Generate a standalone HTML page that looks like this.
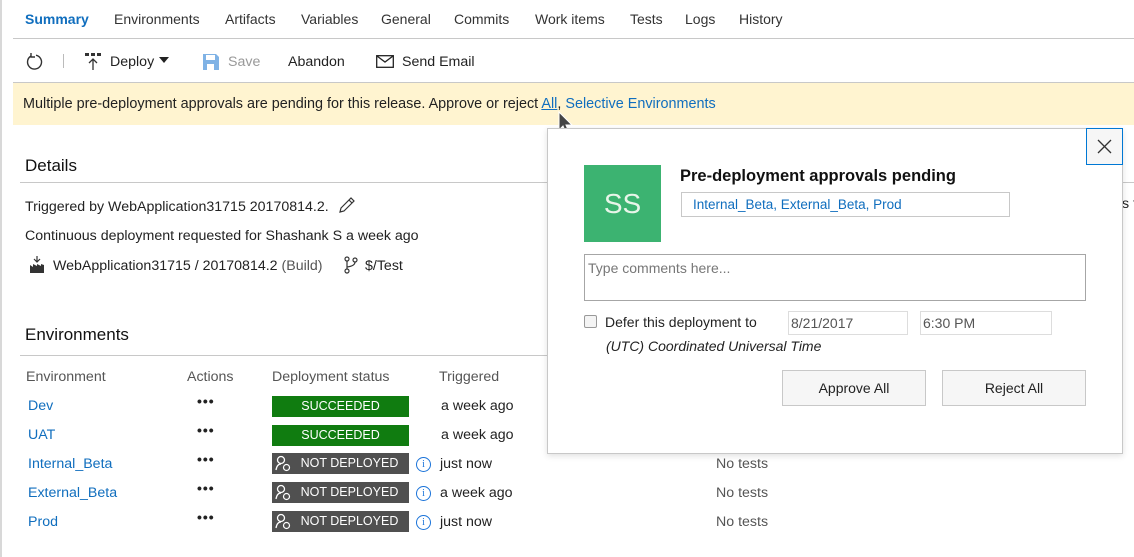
<!DOCTYPE html>
<html><head><meta charset="utf-8"><style>
*{margin:0;padding:0;box-sizing:border-box}
body{width:1134px;height:557px;background:#fff;font-family:"Liberation Sans",sans-serif;font-size:14.2px;color:#222;position:relative;overflow:hidden}
.a{position:absolute;white-space:nowrap}
.tab{color:#333;font-size:14px}
.lnk{color:#106ebe}
.badge{position:absolute;height:21px;color:#fff;font-size:12.5px;line-height:21px;text-align:center;width:137px;left:272px}
.g{background:#107c10}
.d{background:#505050;padding-left:18px}
.info{position:absolute;left:416px;width:15px;height:15px;border:1.3px solid #1a73d9;border-radius:50%;color:#1a73d9;font-size:10px;line-height:13px;text-align:center;font-family:"Liberation Serif",serif}
.dots{position:absolute;left:197px;font-weight:bold;font-size:14px;letter-spacing:1px;color:#222}
.t{font-size:14.2px}
</style></head><body>
<div class="a" style="left:0;top:0;width:2px;height:557px;background:#d8d8d8"></div>
<div class="a tab" style="left:25px;top:11px;color:#106ebe;font-weight:bold">Summary</div>
<div class="a tab" style="left:114px;top:11px">Environments</div>
<div class="a tab" style="left:225px;top:11px">Artifacts</div>
<div class="a tab" style="left:301px;top:11px">Variables</div>
<div class="a tab" style="left:381px;top:11px">General</div>
<div class="a tab" style="left:454px;top:11px">Commits</div>
<div class="a tab" style="left:535px;top:11px">Work items</div>
<div class="a tab" style="left:630px;top:11px">Tests</div>
<div class="a tab" style="left:685px;top:11px">Logs</div>
<div class="a tab" style="left:739px;top:11px">History</div>
<div class="a" style="left:13px;top:38px;width:1121px;height:1px;background:#c8c8c8"></div>
<svg class="a" style="left:25px;top:52px" width="20" height="20" viewBox="0 0 20 20"><path d="M6 4 A7 7 0 1 0 11 3.2" fill="none" stroke="#333" stroke-width="1.4"/><path d="M6 1 L6 5 L10 5" fill="none" stroke="#333" stroke-width="1.4"/></svg>
<div class="a" style="left:63px;top:54px;width:1px;height:14px;background:#bbb"></div>
<svg class="a" style="left:84px;top:52px" width="18" height="20" viewBox="0 0 18 20"><rect x="1" y="1" width="4" height="3" fill="#333"/><rect x="7" y="1" width="4" height="3" fill="#333"/><rect x="13" y="1" width="4" height="3" fill="#333"/><path d="M9 18 V7 M5 11 L9 7 L13 11" fill="none" stroke="#333" stroke-width="1.3"/></svg>
<div class="a t" style="left:110px;top:54px">Deploy</div>
<div class="a" style="left:159px;top:57px;width:0;height:0;border-left:5px solid transparent;border-right:5px solid transparent;border-top:6px solid #222"></div>
<svg class="a" style="left:202px;top:53px" width="18" height="18" viewBox="0 0 18 18"><path d="M1 1 H14 L17 4 V17 H1 Z" fill="#7fb2e5"/><rect x="4" y="2" width="9" height="5" fill="#fff"/><rect x="5" y="11" width="7" height="6" fill="#fff"/></svg>
<div class="a t" style="left:228px;top:54px;color:#999">Save</div>
<div class="a t" style="left:288px;top:54px">Abandon</div>
<svg class="a" style="left:376px;top:55px" width="18" height="13" viewBox="0 0 18 13"><rect x="0.7" y="0.7" width="16.6" height="11.6" fill="none" stroke="#222" stroke-width="1.3"/><path d="M1 1 L9 7 L17 1" fill="none" stroke="#222" stroke-width="1.3"/></svg>
<div class="a t" style="left:402px;top:54px">Send Email</div>
<div class="a" style="left:13px;top:82px;width:1121px;height:1px;background:#c8c8c8"></div>
<div class="a" style="left:13px;top:83px;width:1121px;height:42px;background:#fff4d0"></div>
<div class="a" style="left:23px;top:96px;font-size:14.4px">Multiple pre-deployment approvals are pending for this release. Approve or reject <span class="lnk" style="text-decoration:underline">All</span>, <span class="lnk">Selective Environments</span></div>
<svg class="a" style="left:558px;top:111px" width="18" height="26" viewBox="0 0 18 26"><path d="M1 1 V19 L5 15 L8 22 L11 21 L8 14 L14 14 Z" fill="#444" stroke="#fff" stroke-width="1"/></svg>

<div class="a" style="left:25px;top:156px;font-size:17px;color:#111">Details</div>
<div class="a" style="left:20px;top:182px;width:1114px;height:1px;background:#c8c8c8"></div>
<div class="a t" style="left:25px;top:199px">Triggered by WebApplication31715 20170814.2.</div>
<svg class="a" style="left:338px;top:196px" width="18" height="18" viewBox="0 0 18 18"><path d="M2 16 L3 12 L13 2 L16 5 L6 15 Z M11 4 L14 7" fill="none" stroke="#333" stroke-width="1.2"/></svg>
<div class="a t" style="left:25px;top:228px">Continuous deployment requested for Shashank S a week ago</div>
<svg class="a" style="left:29px;top:256px" width="16" height="18" viewBox="0 0 16 18"><path d="M8 0 V6 M5 3 L8 6 L11 3" fill="none" stroke="#333" stroke-width="1.2"/><path d="M1 17 V9 L4 11 V8 L8 10 V8 L12 10 V8 L15 9 V17 Z" fill="#333"/></svg>
<div class="a t" style="left:53px;top:258px">WebApplication31715 / 20170814.2 <span style="color:#555">(Build)</span></div>
<svg class="a" style="left:344px;top:256px" width="14" height="18" viewBox="0 0 14 18"><circle cx="3" cy="3" r="2" fill="none" stroke="#333" stroke-width="1.2"/><circle cx="11" cy="4" r="2" fill="none" stroke="#333" stroke-width="1.2"/><circle cx="3" cy="15" r="2" fill="none" stroke="#333" stroke-width="1.2"/><path d="M3 5 V13 M11 6 Q11 10 3 11" fill="none" stroke="#333" stroke-width="1.2"/></svg>
<div class="a t" style="left:365px;top:258px">$/Test</div>

<div class="a" style="left:25px;top:325px;font-size:17px;color:#111">Environments</div>
<div class="a" style="left:20px;top:355px;width:527px;height:1px;background:#c8c8c8"></div>
<div class="a t" style="left:26px;top:369px;color:#555">Environment</div>
<div class="a t" style="left:187px;top:369px;color:#555">Actions</div>
<div class="a t" style="left:272px;top:369px;color:#555">Deployment status</div>
<div class="a t" style="left:439px;top:369px;color:#555">Triggered</div>

<div class="a lnk t" style="left:28px;top:398px">Dev</div>
<div class="a lnk t" style="left:28px;top:427px">UAT</div>
<div class="a lnk t" style="left:28px;top:456px">Internal_Beta</div>
<div class="a lnk t" style="left:28px;top:485px">External_Beta</div>
<div class="a lnk t" style="left:28px;top:514px">Prod</div>
<div class="dots" style="top:393px">•••</div>
<div class="dots" style="top:422px">•••</div>
<div class="dots" style="top:451px">•••</div>
<div class="dots" style="top:480px">•••</div>
<div class="dots" style="top:509px">•••</div>
<div class="badge g" style="top:396px">SUCCEEDED</div>
<div class="badge g" style="top:425px">SUCCEEDED</div>
<div class="badge d" style="top:453px">NOT DEPLOYED</div>
<div class="badge d" style="top:482px">NOT DEPLOYED</div>
<div class="badge d" style="top:511px">NOT DEPLOYED</div>
<svg class="a" style="left:275px;top:455px" width="16" height="17" viewBox="0 0 16 17"><circle cx="6" cy="5" r="3.5" fill="none" stroke="#fff" stroke-width="1.3"/><path d="M1 15 Q2 9 6 9" fill="none" stroke="#fff" stroke-width="1.3"/><circle cx="11.5" cy="12.5" r="3" fill="none" stroke="#fff" stroke-width="1.2"/></svg>
<svg class="a" style="left:275px;top:484px" width="16" height="17" viewBox="0 0 16 17"><circle cx="6" cy="5" r="3.5" fill="none" stroke="#fff" stroke-width="1.3"/><path d="M1 15 Q2 9 6 9" fill="none" stroke="#fff" stroke-width="1.3"/><circle cx="11.5" cy="12.5" r="3" fill="none" stroke="#fff" stroke-width="1.2"/></svg>
<svg class="a" style="left:275px;top:513px" width="16" height="17" viewBox="0 0 16 17"><circle cx="6" cy="5" r="3.5" fill="none" stroke="#fff" stroke-width="1.3"/><path d="M1 15 Q2 9 6 9" fill="none" stroke="#fff" stroke-width="1.3"/><circle cx="11.5" cy="12.5" r="3" fill="none" stroke="#fff" stroke-width="1.2"/></svg>
<div class="a t" style="left:441px;top:398px">a week ago</div>
<div class="a t" style="left:441px;top:427px">a week ago</div>
<div class="info" style="top:457px">i</div><div class="a t" style="left:440px;top:456px">just now</div>
<div class="info" style="top:486px">i</div><div class="a t" style="left:440px;top:485px">a week ago</div>
<div class="info" style="top:515px">i</div><div class="a t" style="left:440px;top:514px">just now</div>
<div class="a t" style="left:716px;top:456px;color:#555">No tests</div>
<div class="a t" style="left:716px;top:485px;color:#555">No tests</div>
<div class="a t" style="left:716px;top:514px;color:#555">No tests</div>
<div class="a t" style="left:1122px;top:196px">s f</div>

<div class="a" style="left:547px;top:128px;width:576px;height:326px;background:#fff;border:1px solid #c8c8c8;box-shadow:0 2px 6px rgba(0,0,0,.12)"></div>
<div class="a" style="left:1086px;top:128px;width:37px;height:37px;border:1px solid #0078d4;background:#f6f6f6"></div>
<svg class="a" style="left:1096px;top:138px" width="17" height="17" viewBox="0 0 17 17"><path d="M2 2 L15 15 M15 2 L2 15" stroke="#333" stroke-width="1.3"/></svg>
<div class="a" style="left:584px;top:165px;width:77px;height:77px;background:#3cb371;color:#e8f5e9;font-size:28px;line-height:77px;text-align:center">SS</div>
<div class="a" style="left:680px;top:167px;font-size:16.5px;font-weight:bold;color:#111">Pre-deployment approvals pending</div>
<div class="a" style="left:681px;top:192px;width:329px;height:25px;border:1px solid #c8c8c8"></div>
<div class="a lnk" style="left:693px;top:197px;font-size:13.5px">Internal_Beta, External_Beta, Prod</div>
<div class="a" style="left:584px;top:254px;width:502px;height:47px;border:1px solid #a6a6a6"></div>
<div class="a" style="left:588px;top:260px;color:#777;font-size:14px">Type comments here...</div>
<div class="a" style="left:584px;top:315px;width:13px;height:13px;border:1px solid #999;border-radius:2px;background:#f4f4f4"></div>
<div class="a" style="left:605px;top:314px;font-size:14px">Defer this deployment to</div>
<div class="a" style="left:788px;top:311px;width:120px;height:24px;border:1px solid #ddd"></div>
<div class="a" style="left:791px;top:315px;color:#555;font-size:14px">8/21/2017</div>
<div class="a" style="left:920px;top:311px;width:132px;height:24px;border:1px solid #ddd"></div>
<div class="a" style="left:923px;top:315px;color:#555;font-size:14px">6:30 PM</div>
<div class="a" style="left:606px;top:338px;font-style:italic;font-size:14px">(UTC) Coordinated Universal Time</div>
<div class="a" style="left:782px;top:370px;width:144px;height:36px;border:1px solid #c8c8c8;background:#f6f6f6;text-align:center;line-height:34px;font-size:14px">Approve All</div>
<div class="a" style="left:942px;top:370px;width:144px;height:36px;border:1px solid #c8c8c8;background:#f6f6f6;text-align:center;line-height:34px;font-size:14px">Reject All</div>
</body></html>
